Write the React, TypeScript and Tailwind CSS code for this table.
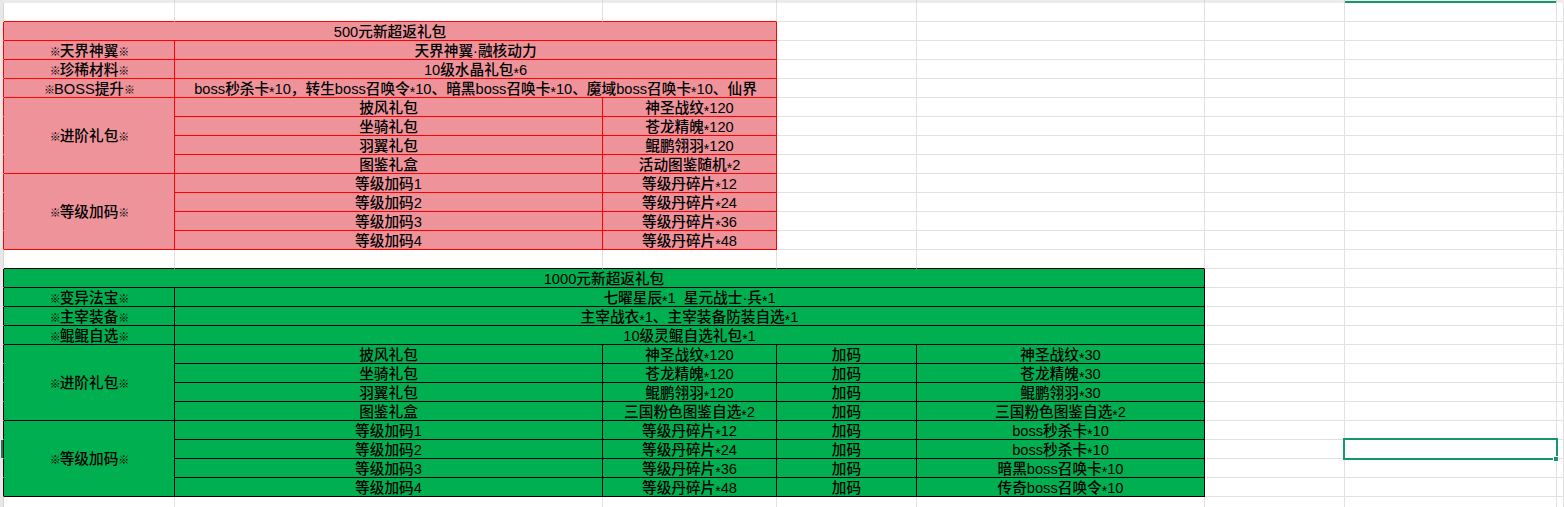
import React from "react";

const GR = "border-r-[#e1e1e1]";
const GB = "border-b-[#e1e1e1]";
const RR = "border-r-[#ff0000]";
const RB = "border-b-[#ff0000]";
const KR = "border-r-black";
const KB = "border-b-black";

const PINK = `bg-[#ef939b] ${RR} ${RB}`;
const GREEN = `bg-[#00b050] ${KR} ${KB}`;
const GRAY = `bg-white ${GR} ${GB}`;

function T({ text }: { text: string }) {
  const parts: React.ReactNode[] = [];
  let buf = "";
  let k = 0;
  const flush = () => {
    if (buf) {
      parts.push(<span key={k++}>{buf}</span>);
      buf = "";
    }
  };
  for (const ch of Array.from(text)) {
    if (ch === "※") {
      flush();
      parts.push(
        <span key={k++} className="text-[11px] font-bold font-['Noto_Sans_CJK_SC',sans-serif] tracking-[-1px]">
          ※
        </span>
      );
    } else if (ch === "*") {
      flush();
      parts.push(
        <span key={k++} className="inline-block translate-y-[3px] text-[14px] leading-[14px]">
          *
        </span>
      );
    } else {
      buf += ch;
    }
  }
  flush();
  return <span className="whitespace-pre leading-[16px]">{parts}</span>;
}

function C({ c, t, children }: { c: string; t?: string; children?: React.ReactNode }) {
  return (
    <div
      className={`border-r border-b flex items-center justify-center whitespace-pre text-[14.67px] font-medium leading-[16px] text-black pt-[1px] ${c}`}
    >
      {t ? <T text={t} /> : null}
      {children}
    </div>
  );
}

function L({ r }: { r: string }) {
  return <div className={`border-r border-b bg-[#e8e8e8] border-b-[#e8e8e8] ${r}`} />;
}

function grays(n: number, prefix: string) {
  return Array.from({ length: n }, (_, i) => <C key={`${prefix}-g${i}`} c={GRAY} />);
}

export default function App() {
  const rows: React.ReactNode[] = [];

  rows.push(
    <div key="s-l" className="bg-[#e8e8e8]" />,
    ...["a", "b", "c", "d", "e", "f"].map((x) => (
      <div key={`s-${x}`} className="bg-[#ececec] border-r border-r-[#d6d6d6]" />
    )),
    <div key="s-g" className="bg-[#ececec] border-r border-r-[#d6d6d6] flex items-end">
      <div className="h-[2px] w-full bg-[#14986a]" />
    </div>,
    <div key="s-h" className="bg-[#ececec]" />
  );

  rows.push(
    <L key="r1-l" r="border-r-[#d6d6d6]" />,
    <C key="r1-a" c={`bg-white ${GR} ${RB}`} />,
    <C key="r1-b" c={`bg-white ${GR} ${RB}`} />,
    <C key="r1-c" c={`bg-white ${GR} ${RB}`} />,
    ...grays(5, "r1")
  );

  rows.push(
    <L key="r2-l" r={RR} />,
    <C key="r2-t" c={`col-span-3 ${PINK}`} t="500元新超返礼包" />,
    ...grays(5, "r2")
  );
  const pinkSingles: [string, string][] = [
    ["※天界神翼※", "天界神翼·融核动力"],
    ["※珍稀材料※", "10级水晶礼包*6"],
    ["※BOSS提升※", "boss秒杀卡*10，转生boss召唤令*10、暗黑boss召唤卡*10、魔域boss召唤卡*10、仙界"],
  ];
  pinkSingles.forEach(([a, b], i) => {
    rows.push(
      <L key={`p${i}-l`} r={RR} />,
      <C key={`p${i}-a`} c={PINK} t={a} />,
      <C key={`p${i}-b`} c={`col-span-2 ${PINK}`} t={b} />,
      ...grays(5, `p${i}`)
    );
  });
  const pinkGroups: [string, [string, string][]][] = [
    [
      "※进阶礼包※",
      [
        ["披风礼包", "神圣战纹*120"],
        ["坐骑礼包", "苍龙精魄*120"],
        ["羽翼礼包", "鲲鹏翎羽*120"],
        ["图鉴礼盒", "活动图鉴随机*2"],
      ],
    ],
    [
      "※等级加码※",
      [
        ["等级加码1", "等级丹碎片*12"],
        ["等级加码2", "等级丹碎片*24"],
        ["等级加码3", "等级丹碎片*36"],
        ["等级加码4", "等级丹碎片*48"],
      ],
    ],
  ];
  pinkGroups.forEach(([head, items], gi) => {
    items.forEach(([b, c], i) => {
      rows.push(<L key={`pg${gi}${i}-l`} r={RR} />);
      if (i === 0) rows.push(<C key={`pg${gi}-a`} c={`row-span-4 ${PINK}`} t={head} />);
      rows.push(
        <C key={`pg${gi}${i}-b`} c={PINK} t={b} />,
        <C key={`pg${gi}${i}-c`} c={PINK} t={c} />,
        ...grays(5, `pg${gi}${i}`)
      );
    });
  });

  rows.push(
    <L key="r14-l" r="border-r-[#d6d6d6]" />,
    ...["a", "b", "c", "d", "e"].map((x) => <C key={`r14-${x}`} c={`bg-white ${GR} ${KB}`} />),
    ...grays(3, "r14")
  );

  rows.push(
    <L key="r15-l" r={KR} />,
    <C key="r15-t" c={`col-span-5 ${GREEN}`} t="1000元新超返礼包" />,
    ...grays(3, "r15")
  );
  const greenSingles: [string, string][] = [
    ["※变异法宝※", "七曜星辰*1  星元战士·兵*1"],
    ["※主宰装备※", "主宰战衣*1、主宰装备防装自选*1"],
    ["※鲲鲲自选※", "10级灵鲲自选礼包*1"],
  ];
  greenSingles.forEach(([a, b], i) => {
    rows.push(
      <L key={`q${i}-l`} r={KR} />,
      <C key={`q${i}-a`} c={GREEN} t={a} />,
      <C key={`q${i}-b`} c={`col-span-4 ${GREEN}`} t={b} />,
      ...grays(3, `q${i}`)
    );
  });
  const greenGroups: [string, [string, string, string][]][] = [
    [
      "※进阶礼包※",
      [
        ["披风礼包", "神圣战纹*120", "神圣战纹*30"],
        ["坐骑礼包", "苍龙精魄*120", "苍龙精魄*30"],
        ["羽翼礼包", "鲲鹏翎羽*120", "鲲鹏翎羽*30"],
        ["图鉴礼盒", "三国粉色图鉴自选*2", "三国粉色图鉴自选*2"],
      ],
    ],
    [
      "※等级加码※",
      [
        ["等级加码1", "等级丹碎片*12", "boss秒杀卡*10"],
        ["等级加码2", "等级丹碎片*24", "boss秒杀卡*10"],
        ["等级加码3", "等级丹碎片*36", "暗黑boss召唤卡*10"],
        ["等级加码4", "等级丹碎片*48", "传奇boss召唤令*10"],
      ],
    ],
  ];
  greenGroups.forEach(([head, items], gi) => {
    items.forEach(([b, c, e], i) => {
      const selected = gi === 1 && i === 1;
      rows.push(
        selected ? (
          <div key={`qg${gi}${i}-l`} className={`border-r border-b bg-[#e8e8e8] border-b-[#e8e8e8] ${KR} flex justify-end`}>
            <div className="w-[2px] h-full bg-[#1d7b5c]" />
          </div>
        ) : (
          <L key={`qg${gi}${i}-l`} r={KR} />
        )
      );
      if (i === 0) rows.push(<C key={`qg${gi}-a`} c={`row-span-4 ${GREEN}`} t={head} />);
      rows.push(
        <C key={`qg${gi}${i}-b`} c={GREEN} t={b} />,
        <C key={`qg${gi}${i}-c`} c={GREEN} t={c} />,
        <C key={`qg${gi}${i}-d`} c={GREEN} t="加码" />,
        <C key={`qg${gi}${i}-e`} c={GREEN} t={e} />,
        <C key={`qg${gi}${i}-f`} c={GRAY} />,
        selected ? (
          <div key={`qg${gi}${i}-g`} className={`relative border-r border-b bg-white ${GR} ${GB}`}>
            <div className="absolute -left-[2px] -top-[2px] -right-[2px] -bottom-[2px] border-2 border-[#14986a]" />
            <div className="absolute -right-[3px] -bottom-[4px] w-[6px] h-[6px] bg-[#14986a] border border-white" />
          </div>
        ) : (
          <C key={`qg${gi}${i}-g`} c={GRAY} />
        ),
        <C key={`qg${gi}${i}-h`} c={GRAY} />
      );
    });
  });

  rows.push(<L key="r27-l" r="border-r-[#d6d6d6]" />, ...grays(8, "r27"));

  return (
    <div className="h-[507px] w-full overflow-hidden bg-white font-['Liberation_Sans','Noto_Sans_CJK_SC',sans-serif]">
      <div className="grid grid-cols-[4px_171px_428px_174px_140px_288px_140px_212px_1fr] grid-rows-[3px] auto-rows-[19px]">
        {rows}
      </div>
    </div>
  );
}
